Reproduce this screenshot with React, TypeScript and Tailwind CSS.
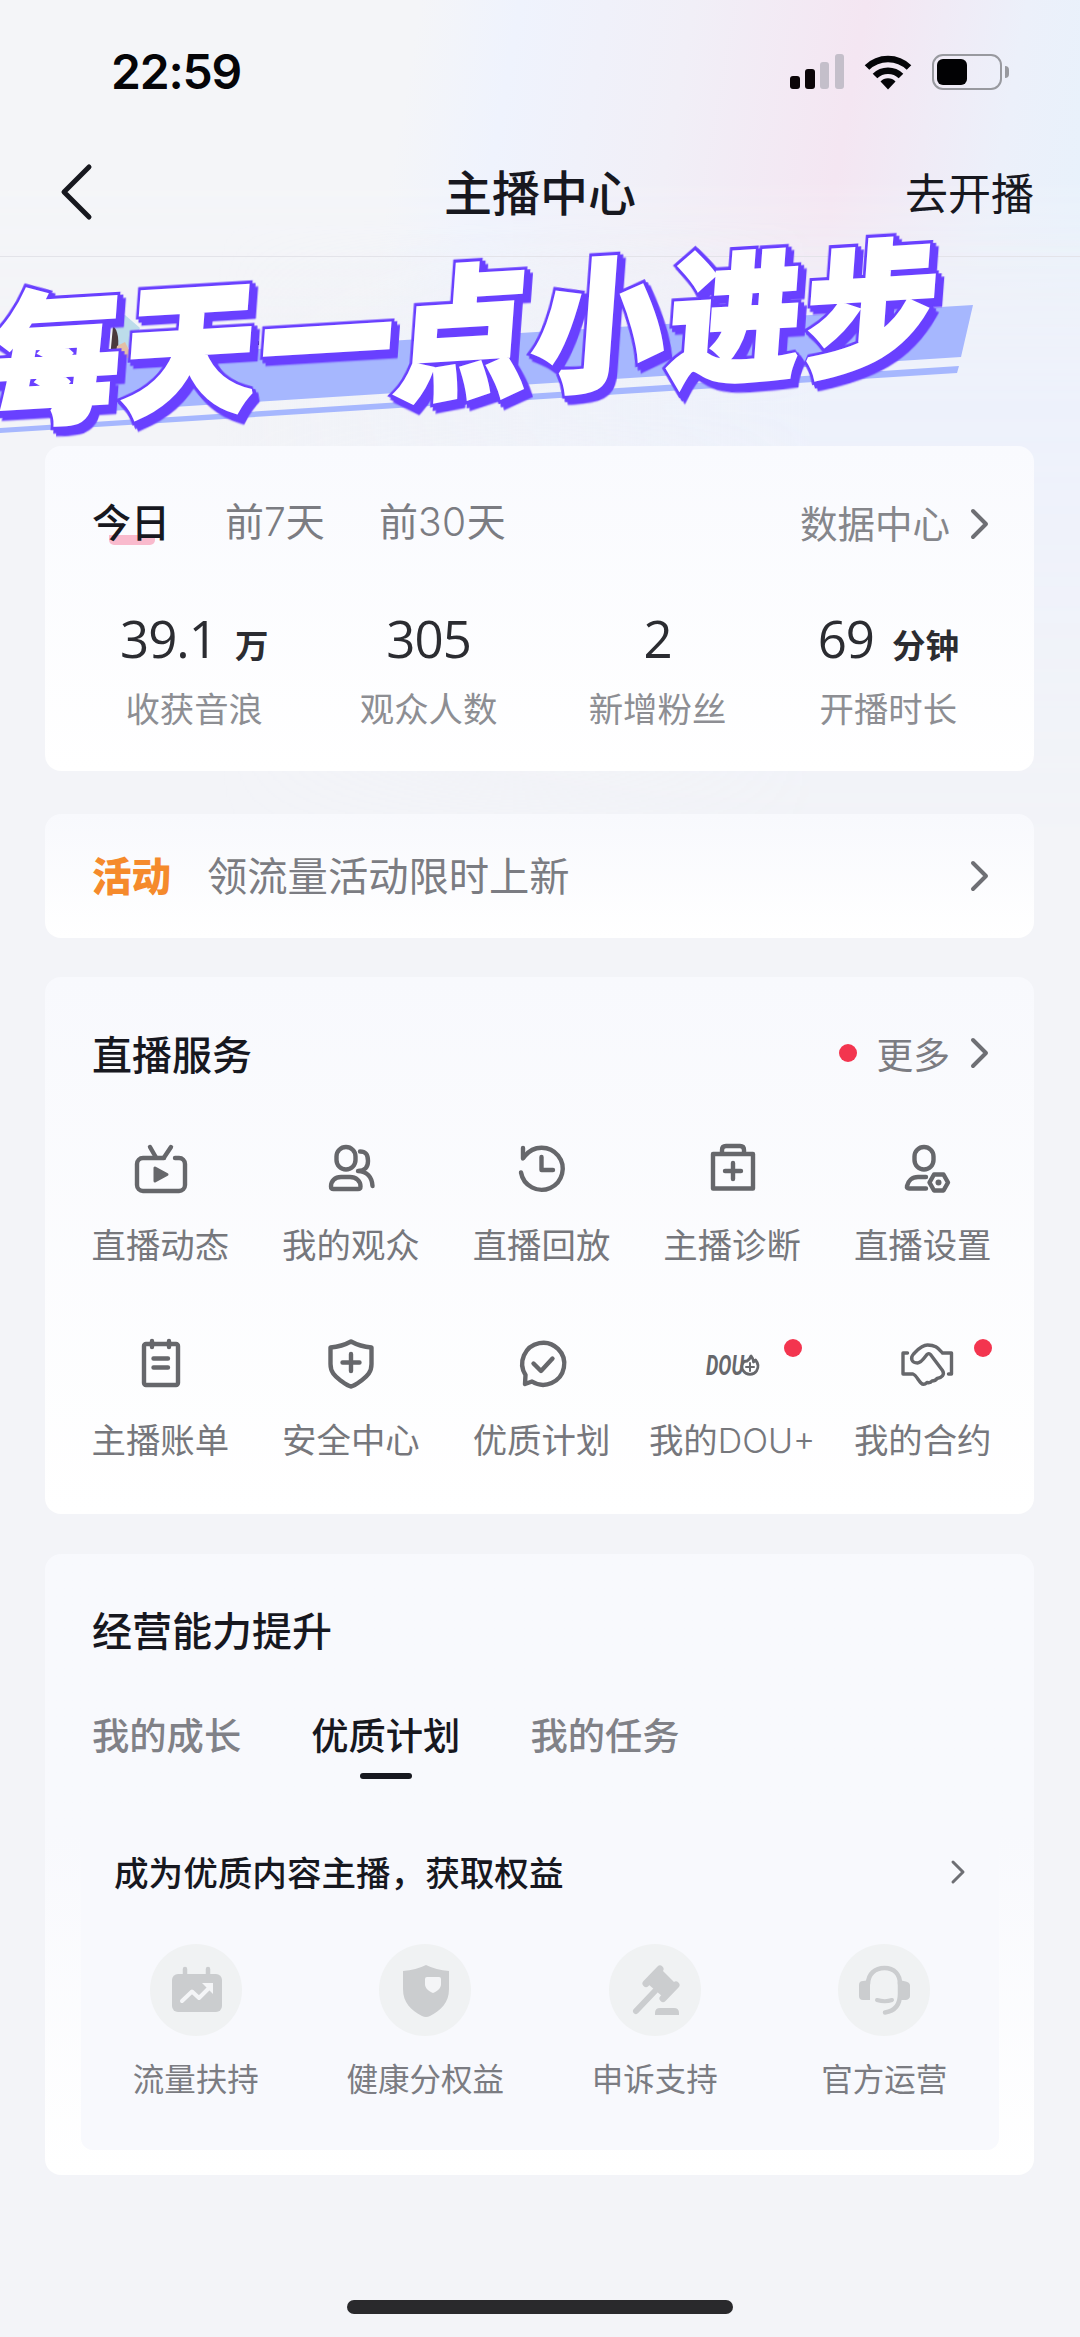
import type { ReactNode } from 'react';

const todayStats = [
  { value: '39.1', unit: '万', label: '收获音浪' },
  { value: '305', label: '观众人数' },
  { value: '2', label: '新增粉丝' },
  { value: '69', unit: '分钟', label: '开播时长' },
];

const Icon = ({ children }: { children: ReactNode }) => (
  <svg
    viewBox="0 0 60 60"
    className="w-[60px] h-[60px] text-[#66676b] overflow-visible"
    fill="none"
    stroke="currentColor"
    strokeWidth={4.4}
    strokeLinecap="round"
    strokeLinejoin="round"
  >
    {children}
  </svg>
);

const services = [
  {
    label: '直播动态',
    icon: (
      <Icon>
        <path d="M34 19H13a6 6 0 0 0-6 6v21a6 6 0 0 0 6 6h36a6 6 0 0 0 6-6V25a6 6 0 0 0-6-6h-4" />
        <path d="M20 8l6 10.500M41 8l-7 10.500" />
        <path d="M25 29v13l12-6.500z" fill="currentColor" strokeWidth={3} />
      </Icon>
    ),
  },
  {
    label: '我的观众',
    icon: (
      <Icon>
        <rect x="15.500" y="8" width="19" height="22.500" rx="9.500" />
        <path d="M20 38h9c6 0 10.500 4 10.500 9.500q0 2.500-2.500 2.500H12.500q-2.500 0-2.500-2.500C10 42 14 38 20 38z" />
        <path d="M39 12.500c6 0 8 3 8 9.500s-3 9.500-10 10c9 .500 14 6 14.500 15" />
      </Icon>
    ),
  },
  {
    label: '直播回放',
    icon: (
      <Icon>
        <path d="M12 9v10.500l2-2.500A21 21 0 1 1 10 33.500" />
        <path d="M30.500 18v13H42" />
      </Icon>
    ),
  },
  {
    label: '主播诊断',
    icon: (
      <Icon>
        <path d="M11 15h40v34.500H11zM20 15v-4q0-4 4-4h14q4 0 4 4v4M31 24v16M23 32h16" />
      </Icon>
    ),
  },
  {
    label: '直播设置',
    icon: (
      <Icon>
        <rect x="21.500" y="8" width="19" height="22.500" rx="9.500" />
        <path d="M33 38h-8c-6 0-10 4-11 9q-.500 2.500 2 2.500h17" />
        <path d="M41 35.500h9.500l4.500 8-4.500 8H41l-4.500-8z" />
        <circle cx="45.500" cy="43.500" r="3" fill="currentColor" stroke="none" />
      </Icon>
    ),
  },
  {
    label: '主播账单',
    icon: (
      <Icon>
        <rect x="14" y="10" width="34" height="41" rx="2" />
        <path d="M22 7v6M39 7v6M23.500 24.500H38M23.500 33.500H38" />
      </Icon>
    ),
  },
  {
    label: '安全中心',
    icon: (
      <Icon>
        <path d="M30 7.500Q39 12.500 50.500 13.500V30c0 8-4 12-10 16.500-4 3-7 5.500-10.500 6-3.500-.500-6.500-3-10.500-6C13.500 42 9.500 38 9.500 30V13.500Q21 12.500 30 7.500z" />
        <path d="M30 20v17M21.500 28.500h17" />
      </Icon>
    ),
  },
  {
    label: '优质计划',
    icon: (
      <Icon>
        <path d="M14.500 41A21 21 0 1 1 21 47.500l-7 2.500z" />
        <path d="M22.500 29.500l7.500 7.500 11.500-12.500" />
      </Icon>
    ),
  },
  {
    label: '我的',
    suffix: 'DOU+',
    dot: true,
    icon: (
      <Icon>
        <text
          x="4"
          y="41"
          textLength="38"
          lengthAdjust="spacingAndGlyphs"
          fill="currentColor"
          stroke="none"
          fontFamily="Roboto, sans-serif"
          fontWeight="700"
          fontStyle="italic"
          fontSize="27"
        >
          DOU
        </text>
        <path d="M42 27.500c-2.500 3-3 6.500-.500 9.500 3 4.500 10 4.500 13 0 2.500-4 1.500-8-1-11l-2 2q0-3-2.500-6-1 3-4 5z" strokeWidth={2.8} />
        <path d="M48 29v8M44 33h8" strokeWidth={2} />
      </Icon>
    ),
  },
  {
    label: '我的合约',
    dot: true,
    icon: (
      <Icon>
        <path
          d="M14.500 19H10v21h10c3 1 5 6 8 9 2 2 4 1.500 6-.500 2.500.500 4 0 5-1.500 3 0 4-1 5-2.500 5-.500 8-4 5.500-8L37.500 20.500q-1.500-2-4 .500c-3 4-5 7.500-9 8-6 0-7.500-5-4-9 4-4 8-9 14-9 9 0 11 4 15 8h9v21h-3"
          strokeWidth={3.4}
        />
      </Icon>
    ),
  },
];

const Benefit = ({ children }: { children: ReactNode }) => (
  <svg
    viewBox="0 0 92 92"
    className="w-[92px] h-[92px] rounded-full bg-[#f0f2f3] text-[#cbcdcf]"
    fill="none"
    stroke="currentColor"
    strokeLinecap="round"
    strokeLinejoin="round"
  >
    {children}
  </svg>
);

const benefits = [
  {
    label: '流量扶持',
    icon: (
      <Benefit>
        <rect x="22" y="30" width="50" height="38" rx="6" fill="currentColor" stroke="none" />
        <path d="M35 25v7M58 25v7" strokeWidth={4.5} />
        <path d="M32 57l10-9.500 7 6.500 11-11" stroke="#f4f5f7" strokeWidth={4} />
        <path d="M52 39h11v11z" fill="#f4f5f7" stroke="none" />
      </Benefit>
    ),
  },
  {
    label: '健康分权益',
    icon: (
      <Benefit>
        <path d="M47 21q10 5 23 6v18c0 14-8 21-19 27q-4 2-8 0C32 66 24 59 24 45V27q13-1 23-6z" fill="currentColor" stroke="none" />
        <path d="M48 33h12q2 0 2 2v5c0 4-3 7-8 9-5-2-8-5-8-9v-5q0-2 2-2z" fill="#f4f5f7" stroke="none" />
      </Benefit>
    ),
  },
  {
    label: '申诉支持',
    icon: (
      <Benefit>
        <path d="M51 25L37 39.500M67 41L54 54.500" strokeWidth={7} />
        <path d="M53 26l13 13-12 14-15-13z" fill="currentColor" stroke="none" />
        <path d="M46 47L27 67" strokeWidth={6} />
        <path d="M46 71v-2q0-5 5-5h14q5 0 5 5v2z" fill="currentColor" stroke="none" />
      </Benefit>
    ),
  },
  {
    label: '官方运营',
    icon: (
      <Benefit>
        <path d="M30 40c0-10 7-16 16.500-16S62 30 62 40" strokeWidth={4.500} />
        <path d="M62 38v12c0 11-5 17-15 18.500" strokeWidth={4.500} />
        <path d="M39 56q8 2.500 15 0" strokeWidth={4} />
        <path d="M32 36v20h-7q-4 0-4-4V41q0-4 4-4zM61 36l7 1.500q4 1 4 4V52q0 3-4 4h-7z" fill="currentColor" stroke="none" />
      </Benefit>
    ),
  },
];

const Chevron = () => (
  <svg viewBox="0 0 20 32" className="w-5 h-8" fill="none" stroke="#6e6f74" strokeWidth={4} strokeLinecap="round" strokeLinejoin="round">
    <path d="M3 3l13 13L3 29" />
  </svg>
);

const StatusBar = () => (
  <div className="h-[144px] flex items-center justify-between pl-[111px] pr-[71px]">
    <span className="font-['Inter'] font-semibold text-[48px] leading-none tracking-[-1.2px] text-[#050508]">22:59</span>
    <div className="flex items-center">
      <svg viewBox="0 0 54 36" className="w-[54px] h-9">
        <rect x="0" y="22" width="10" height="13" rx="3" fill="#0b0508" />
        <rect x="15" y="15" width="10" height="20" rx="3" fill="#0b0508" />
        <rect x="30" y="8" width="9" height="27" rx="3" fill="#c4bfca" />
        <rect x="45" y="0" width="9" height="35" rx="3" fill="#c4bfca" />
      </svg>
      <svg viewBox="0 0 48 36" className="w-12 h-9 ml-5" fill="none" stroke="#050508" strokeWidth={6.5}>
        <path d="M3 13.500a30 30 0 0 1 42 0" />
        <path d="M11 22a18.500 18.500 0 0 1 26 0" />
        <path d="M24 35.500l-7.500-8a10.500 10.500 0 0 1 15 0z" fill="#050508" stroke="none" />
      </svg>
      <div className="flex items-center ml-5">
        <div className="w-[70px] h-9 rounded-[11px] border-[2.5px] border-[#98999f] p-[3px]">
          <div className="w-[30px] h-full rounded-[6px] bg-[#020204]" />
        </div>
        <div className="w-1 h-3 ml-[3px] rounded-r-full bg-[#98999f]" />
      </div>
    </div>
  </div>
);

const NavBar = () => (
  <div className="h-[113px] pb-[16px] pl-[58px] pr-[46px] grid grid-cols-3 items-center border-b border-[#e3e3e9] text-[#17181f]">
    <svg viewBox="0 0 36 60" className="w-9 h-[60px]" fill="none" stroke="currentColor" strokeWidth={5} strokeLinecap="round" strokeLinejoin="round">
      <path d="M31 5L6 30l25 25" />
    </svg>
    <div className="mb-[4px] text-[48px] font-medium text-center -translate-x-[6px]">主播中心</div>
    <div className="mb-[2px] text-[43px] text-right">去开播</div>
  </div>
);

/* Slogan sticker that lies over the header and the profile row */
const Slogan = () => (
  <svg viewBox="0 0 1080 257" className="absolute left-0 -top-[57px] w-[1080px] h-[257px] overflow-visible">
    <g fill="#a6b7fe">
      <path d="M0 165L973 105l-12 52L0 218z" />
      <path d="M0 228L959 166l-2 7L0 233z" />
    </g>
    <path d="M113 116l12-1 15 13-4 8-14 22h-9z" fill="#bcdcea" />
    <path d="M113 126q8 6 4 32h-7z" fill="#4a3a3c" />
    <path d="M117 146l8-4 7 14-4 2h-13z" fill="#e3bfa5" />
    <path d="M254 141h5v4h-5zM253 146h5v4h-5z" fill="#111" />
    <g
      fontFamily="'Noto Sans CJK SC', sans-serif"
      fontWeight="900"
      fontSize="131"
      letterSpacing="5.2"
      strokeLinejoin="miter"
      strokeMiterlimit="2"
      transform="matrix(1 -0.06 -0.08 1.09 -15 215)"
    >
      <text
        className="[filter:drop-shadow(3px_3px_0_#6940ff)_drop-shadow(3px_3px_0_#6940ff)]"
        fill="#6940ff"
        stroke="#6940ff"
        strokeWidth="10"
      >
        每天一点小进步
      </text>
      <text fill="#fff" stroke="#fff" strokeWidth="4.5">
        每天一点小进步
      </text>
    </g>
  </svg>
);

const App = () => {
  return (
    <div className="relative w-[1080px] h-[2337px] overflow-hidden bg-[#f3f4f8] font-['Noto_Sans_CJK_SC',sans-serif] leading-none">
      {/* Soft colour wash behind the header */}
      <div className="absolute inset-x-0 top-0 h-[900px] bg-[linear-gradient(100deg,#f4f5f8_34%,#eff3fd_42%,#f1eff7_56%,#f4e6f2_70%,#ecf0fa_83%,#e5f2fc_96%)] [mask-image:linear-gradient(to_bottom,#000_20%,transparent_44%)]" />
      <div className="absolute inset-x-0 top-[220px] h-[620px] bg-[linear-gradient(90deg,transparent_20%,#edf1fb_75%)] [mask-image:linear-gradient(to_bottom,transparent,#000_30%,transparent)]" />

      <div className="relative">
        <StatusBar />
        <NavBar />
        <div className="relative h-[189px]">
          <Slogan />
        </div>

        <main className="pl-[45px] pr-[46px] flex flex-col">
          {/* Live data */}
          <section className="h-[325px] rounded-[16px] bg-linear-to-b from-[#f9fafe] to-white">
            <div className="pt-[53px] pl-[47px] pr-[44px] flex items-center justify-between">
              <div className="-mt-[4px] mb-[4px] flex items-center text-[39px] h-[50px] text-[#7b7c82]">
                <div className="relative text-[#17181f] font-medium">
                  <span className="absolute left-[17px] -bottom-[5px] w-[46px] h-[10px] rounded-b-[5px] bg-[#f9bacd]" />
                  <span className="relative">今日</span>
                </div>
                <div className="ml-[55px]">
                  前<span className="font-['Inter'] font-light">7</span>天
                </div>
                <div className="ml-[54px]">
                  前<span className="font-['Inter'] font-light tracking-[0.5px]">30</span>天
                </div>
              </div>
              <div className="flex items-center gap-5 text-[37.5px] text-[#85868b]">
                <span className="-mt-[4px]">数据中心</span>
                <Chevron />
              </div>
            </div>
            <div className="mt-[60px] px-[75px] flex justify-between">
              {todayStats.map((stat) => (
                <div key={stat.label} className="flex flex-col items-center">
                  <div className="h-[62px] flex items-baseline text-[#2b2c31]">
                    <span className="font-['Open_Sans'] font-medium text-[51px] leading-[58px] tracking-[-1px]">{stat.value}</span>
                    {stat.unit && <span className="ml-[18px] text-[33.5px] font-bold">{stat.unit}</span>}
                  </div>
                  <div className="mt-[19px] text-[34.4px] text-[#8d8e93]">{stat.label}</div>
                </div>
              ))}
            </div>
          </section>

          {/* Activity */}
          <section className="mt-[43px] h-[124px] rounded-[16px] bg-linear-to-b from-[#f8f9fd] to-white pl-[47px] pr-[44px] flex items-center">
            <span className="mb-[4px] text-[39.5px] font-black text-[#f58a2c]">活动</span>
            <span className="mb-[4px] ml-[36px] text-[40.3px] text-[#7b7c82]">领流量活动限时上新</span>
            <span className="ml-auto">
              <Chevron />
            </span>
          </section>

          {/* Live services */}
          <section className="mt-[39px] h-[537px] rounded-[16px] bg-linear-to-b from-[#f8f9fd] to-white">
            <div className="pt-[51px] pl-[47px] pr-[44px] flex items-center justify-between">
              <h2 className="h-[50px] flex items-center text-[40px] font-medium text-[#17181f]">直播服务</h2>
              <div className="flex items-center text-[36.8px] text-[#7b7c82]">
                <span className="w-[18px] h-[18px] rounded-full bg-[#f3354f] mr-[19px]" />
                更多
                <span className="ml-5">
                  <Chevron />
                </span>
              </div>
            </div>
            <div className="mt-[61px] ml-[20px] mr-[16px] grid grid-cols-5 gap-y-[58px]">
              {services.map((item) => (
                <div key={item.label} className="relative h-[137px] flex flex-col items-center">
                  {item.icon}
                  {item.dot && <span className="absolute left-[147px] top-[5px] w-[18px] h-[18px] rounded-full bg-[#f3354f]" />}
                  <div className="mt-[27px] text-[34.4px] whitespace-nowrap text-[#76777c]">
                    {item.label}
                    {item.suffix && <span className="font-['Inter'] font-light text-[34px]">{item.suffix}</span>}
                  </div>
                </div>
              ))}
            </div>
          </section>

          {/* Growth */}
          <section className="mt-[40px] h-[621px] rounded-[16px] bg-linear-to-b from-[#f8f9fd] from-45% to-white">
            <h2 className="pt-[55px] pl-[47px] text-[40px] font-medium text-[#17181f]">经营能力提升</h2>
            <div className="mt-[67px] pl-[47px] flex gap-[70px] text-[37.3px] font-medium text-[#808187]">
              <div>我的成长</div>
              <div className="flex flex-col items-center text-[#17181f]">
                优质计划
                <span className="mt-[20px] w-[52px] h-[6px] rounded-full bg-current" />
              </div>
              <div>我的任务</div>
            </div>
            <div className="mt-[34px] ml-[36px] mr-[35px] h-[337px] rounded-[12px] bg-[#f8f9fd]">
              <div className="pt-[41px] pl-[33px] pr-[33px] flex items-center justify-between">
                <div className="text-[34.600px] font-medium text-[#17181f]">成为优质内容主播，获取权益</div>
                <svg viewBox="0 0 16 26" className="w-4 h-[26px]" fill="none" stroke="#6e6f74" strokeWidth={3} strokeLinecap="round" strokeLinejoin="round">
                  <path d="M3 3l10 10L3 23" />
                </svg>
              </div>
              <div className="mt-[55px] grid grid-cols-4">
                {benefits.map((item) => (
                  <div key={item.label} className="flex flex-col items-center">
                    {item.icon}
                    <div className="mt-[26px] text-[31.5px] text-[#7b7c82]">{item.label}</div>
                  </div>
                ))}
              </div>
            </div>
          </section>
        </main>

        <div className="mt-[125px] mx-auto w-[386px] h-[14px] rounded-full bg-[#29292c]" />
      </div>
    </div>
  );
};

export default App;
